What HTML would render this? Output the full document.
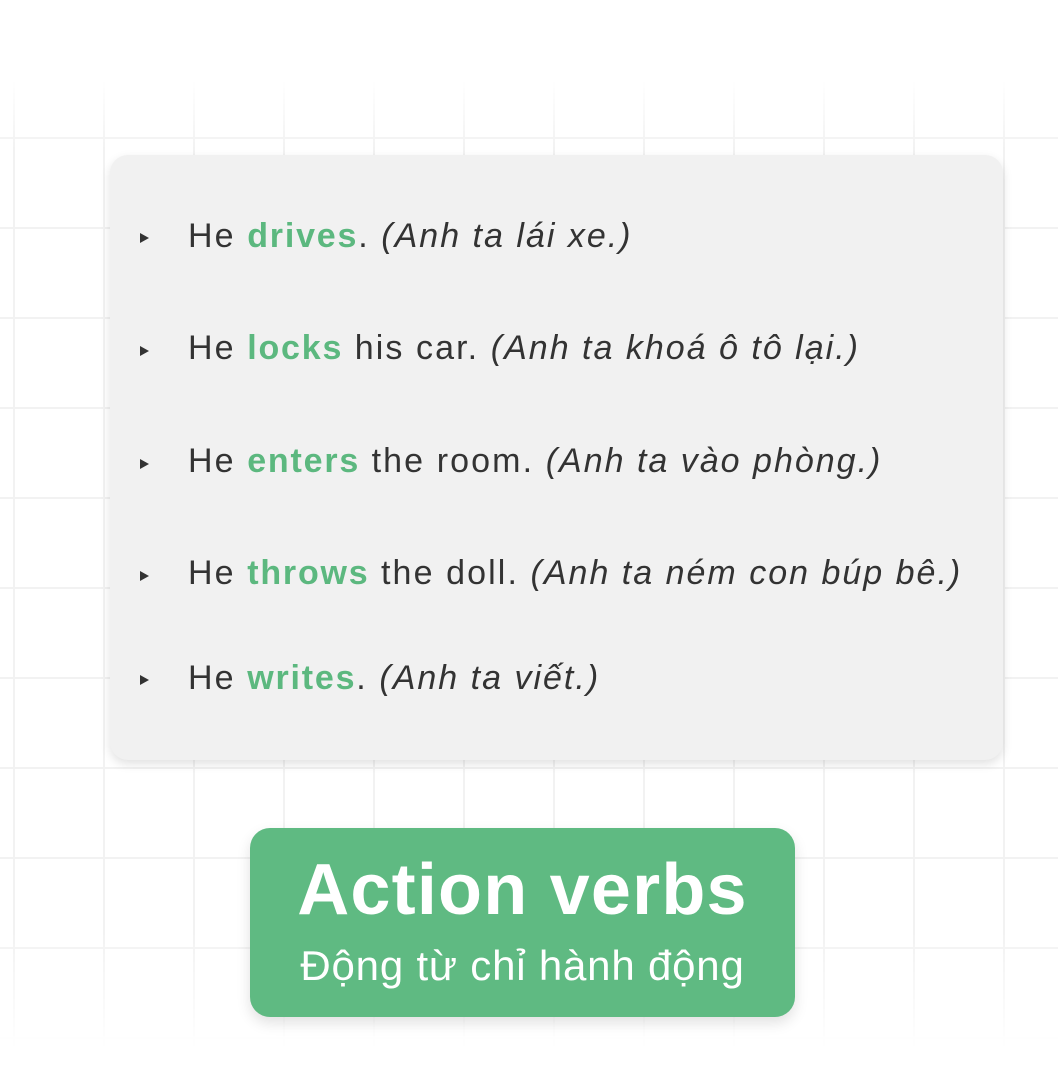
<!DOCTYPE html>
<html><head><meta charset="utf-8"><style>
html,body{margin:0;padding:0}
body{width:1058px;height:1079px;position:relative;overflow:hidden;background:#fff;font-family:"Liberation Sans",sans-serif}
.grid{position:absolute;left:0;top:0;width:1058px;height:1079px;
background-image:linear-gradient(#f2f2f2 2px,transparent 2px),linear-gradient(90deg,#f2f2f2 2px,transparent 2px);
background-size:90px 90px;background-position:13px 47px,13px 47px;
-webkit-mask-image:linear-gradient(to bottom,transparent 0,transparent 80px,#000 150px,#000 930px,transparent 1050px);
}
.card{position:absolute;left:110px;top:155px;width:893px;height:605px;background:#f1f1f1;border-radius:18px;box-shadow:0 4px 10px rgba(0,0,0,.12)}
.row{position:absolute;left:188px;font-size:34px;color:#333;letter-spacing:2.1px;white-space:nowrap}
.row b{color:#5cb87f;letter-spacing:1.8px}
.row i{letter-spacing:2px}
.bul{position:absolute;left:140px;width:0;height:0;border-left:9px solid #333;border-top:5px solid transparent;border-bottom:5px solid transparent}
.box{position:absolute;left:250px;top:828px;width:545px;height:189px;background:#5fba82;border-radius:20px;box-shadow:0 6px 14px rgba(0,0,0,.12)}
.t1{position:absolute;left:250px;width:545px;top:849px;font-size:72px;font-weight:bold;text-align:center;color:#fff;letter-spacing:1.2px}
.t2{position:absolute;left:250px;width:545px;top:942px;font-size:42px;text-align:center;color:#fff;letter-spacing:.8px}
</style></head><body>
<div class="grid"></div>
<div class="card"></div>
<div class="bul" style="top:233px"></div><div class="row" style="top:217px">He <b>drives</b>. <i>(Anh ta lái xe.)</i></div>
<div class="bul" style="top:346px"></div><div class="row" style="top:329px">He <b>locks</b> his car. <i>(Anh ta khoá ô tô lại.)</i></div>
<div class="bul" style="top:459px"></div><div class="row" style="top:442px">He <b>enters</b> the room. <i>(Anh ta vào phòng.)</i></div>
<div class="bul" style="top:571px"></div><div class="row" style="top:554px">He <b>throws</b> the doll. <i>(Anh ta ném con búp bê.)</i></div>
<div class="bul" style="top:675px"></div><div class="row" style="top:659px">He <b>writes</b>. <i>(Anh ta viết.)</i></div>
<div class="box"></div>
<div class="t1">Action verbs</div>
<div class="t2">Động từ chỉ hành động</div>
</body></html>
